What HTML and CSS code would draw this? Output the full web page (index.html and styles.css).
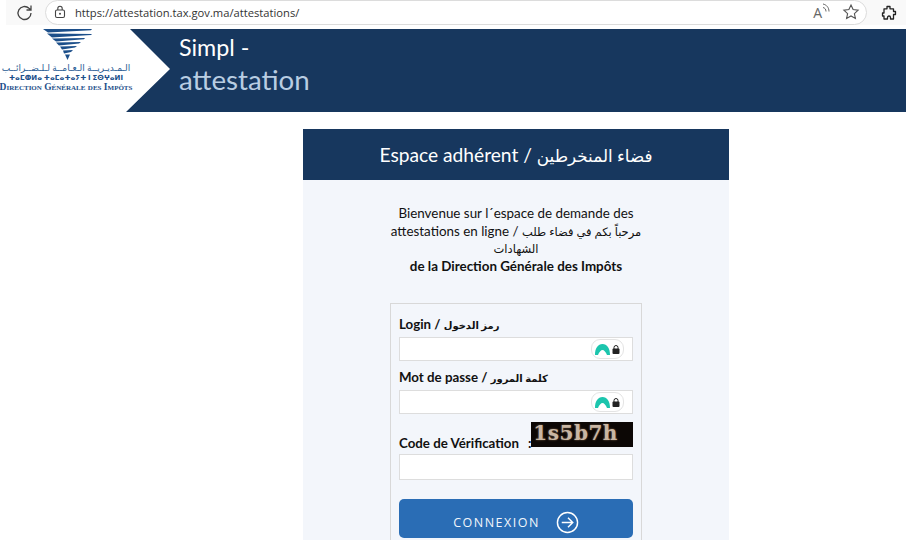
FILE: index.html
```html
<!DOCTYPE html>
<html lang="fr">
<head>
    <meta charset="UTF-8">
    <title>Simpl - attestation</title>
    <link rel="stylesheet" href="styles.css">
</head>
<body>
    <div class="toolbar">
        <svg class="reload" width="20" height="20" viewBox="0 0 20 20"><path d="M16 10a6.500 6.500 0 1 1-2-4.700L16 7M16 2.500V7h-4.500" fill="none" stroke="#444" stroke-width="1.300"/></svg>
        <div class="address">
            <svg width="14" height="14" viewBox="0 0 14 14"><rect x="2.500" y="5" width="9" height="7.500" rx="1.500" fill="none" stroke="#444" stroke-width="1.100"/><path d="M4.800 5V3.500a2.200 2.200 0 0 1 4.400 0V5" fill="none" stroke="#444" stroke-width="1.100"/><circle cx="7" cy="8.800" r="1" fill="#444"/></svg>
            <span class="url">https://attestation.tax.gov.ma/attestations/</span>
            <span class="read">A<svg width="10" height="12" viewBox="0 0 10 12"><path d="M1 1c3.500.8 6 3.500 6 7.500M1 4.500c1.800.4 3 1.800 3 4" fill="none" stroke="#666" stroke-width="1"/></svg></span>
            <svg class="star" width="18" height="18" viewBox="0 0 18 18"><path d="M9 2l2.100 4.600 5 .6-3.700 3.400 1 4.900L9 13l-4.400 2.500 1-4.900L1.900 7.200l5-.6z" fill="none" stroke="#555" stroke-width="1.100"/></svg>
        </div>
        <svg class="ext" width="16" height="16" viewBox="0 0 16 16"><path d="M6 1.500h3v2.300h3.500v2.700h2v3h-2v4.500H9.500v-1.500a1.500 1.500 0 0 0-3 0v1.500H3v-3H1.500V8H3V3.800h3z" fill="none" stroke="#222" stroke-width="1.300" stroke-linejoin="round"/></svg>
    </div>

    <header class="banner">
        <div class="logo">
            <svg class="logo-mark" width="50" height="31" viewBox="0 0 50 31">
                <path d="M0 0h49l-1 1.200L5 3.500zM4 4.500l45 .5-1 1L9 8.500zM9 9.500l33-.5-1 1.200L13 12.500zM13 13.500l25-.5-2 1.500L16 16.500zM17 17.500l17-.5-2 1.500L19 20.500zM20 21.500l10-.5-2 2-7 1.500zM22 25.500h5L24.500 31z" fill="#1c4f8a"/>
            </svg>
            <div class="logo-ar" dir="rtl">الـمـديـريــة الـعـامــة لـلـضــرائــب</div>
            <div class="logo-am">ⵜⴰⵎⵀⵍⴰ ⵜⴰⵎⴰⵜⴰⵢⵜ ⵏ ⵉⵙⵖⴰⵍⵏ</div>
            <div class="logo-fr">Direction Générale des Impôts</div>
        </div>
        <div class="title-band">
            <div class="title-main">Simpl -</div>
            <div class="title-sub">attestation</div>
        </div>
    </header>

    <main class="card">
        <h2 class="card-head">Espace adhérent / <span class="ar-head">فضاء المنخرطين</span></h2>
        <div class="card-body">
            <p class="welcome">Bienvenue sur l´espace de demande des attestations en ligne / <span class="ar-text">مرحباً بكم في فضاء طلب الشهادات</span><br><b>de la Direction Générale des Impôts</b></p>
            <form class="login">
                <label class="field-label">Login / <span class="ar-label">رمز الدخول</span></label>
                <div class="input pw"><span class="badge"><svg width="15" height="11" viewBox="0 0 15 11"><path d="M0 11C0 4 3 0 7.500 0S15 4 15 11H12C11 8 9 6 7.500 6S4 8 3 11z" fill="#1cc5ad"/></svg><svg width="8" height="9" viewBox="0 0 8 9"><rect x="0.500" y="3.500" width="7" height="5.500" rx="1" fill="#222"/><path d="M2 4V2.500a2 2 0 0 1 4 0V4" fill="none" stroke="#222"/></svg></span></div>
                <label class="field-label">Mot de passe / <span class="ar-label">كلمة المرور</span></label>
                <div class="input pw"><span class="badge"><svg width="15" height="11" viewBox="0 0 15 11"><path d="M0 11C0 4 3 0 7.500 0S15 4 15 11H12C11 8 9 6 7.500 6S4 8 3 11z" fill="#1cc5ad"/></svg><svg width="8" height="9" viewBox="0 0 8 9"><rect x="0.500" y="3.500" width="7" height="5.500" rx="1" fill="#222"/><path d="M2 4V2.500a2 2 0 0 1 4 0V4" fill="none" stroke="#222"/></svg></span></div>
                <div class="captcha-row">
                    <label class="field-label code">Code de Vérification</label>
                    <span class="colon">:</span>
                    <span class="captcha">1s5b7h</span>
                </div>
                <div class="input code-input"></div>
                <button type="button" class="connect">CONNEXION
                    <svg width="23" height="23" viewBox="0 0 24 24"><circle cx="12" cy="12" r="10.500" fill="none" stroke="#fff" stroke-width="1.500"/><path d="M6 12h11.500M12.500 7l5 5-5 5" fill="none" stroke="#fff" stroke-width="1.500"/></svg>
                </button>
            </form>
        </div>
    </main>
</body>
</html>
```

FILE: styles.css
```css
html, body {
    height: 540px;
    overflow: hidden;
}
body {
    margin: 0;
    background-color: #ffffff;
    color: #111;
    font-family: Lato, "Noto Sans", "DejaVu Sans", sans-serif;
}

/* browser bar */
.toolbar {
    display: flex;
    align-items: center;
    height: 25px;
    margin-left: 6px;
    margin-bottom: 4px;
    padding-right: 9px;
    background-color: #f9f9f9;
}
.reload {
    margin-left: 9px;
    margin-right: 10px;
}
.address {
    flex: 1;
    display: flex;
    align-items: center;
    gap: 8px;
    height: 25px;
    margin-top: -1px;
    padding-left: 7px;
    padding-right: 6px;
    box-sizing: border-box;
    background-color: #fff;
    border: 1px solid #dcdcdc;
    border-radius: 13px;
}
.url {
    flex: 1;
    font-family: "Open Sans", sans-serif;
    font-size: 11.200px;
    color: #333;
}
.read {
    display: flex;
    margin-right: 2px;
    font-family: "Open Sans", sans-serif;
    font-size: 14px;
    color: #666;
}
.ext {
    margin-left: 14px;
}

/* banner */
.banner {
    display: flex;
    height: 83px;
    margin-left: 6px;
    margin-bottom: 17px;
}
.logo {
    width: 120px;
    flex: none;
    display: flex;
    flex-direction: column;
    align-items: center;
}
.logo-mark {
    margin-left: 3px;
}
.logo-ar {
    margin-top: 2px;
    font-size: 9px;
    line-height: 11px;
    color: #2a5d95;
    white-space: nowrap;
}
.logo-am {
    font-family: "Noto Sans", "DejaVu Sans", sans-serif;
    font-size: 7px;
    line-height: 10px;
    font-weight: bold;
    color: #1c4f8a;
    white-space: nowrap;
}
.logo-fr {
    font-family: "Liberation Serif", serif;
    font-variant: small-caps;
    font-size: 9.500px;
    font-weight: bold;
    line-height: 9px;
    color: #1c4f8a;
    white-space: nowrap;
}
.title-band {
    flex: 1;
    padding-left: 53px;
    padding-top: 3px;
    background-color: #17375e;
    clip-path: polygon(4px 0, 100% 0, 100% 100%, 0 100%, 44px 40px);
}
.title-main {
    font-size: 23.300px;
    line-height: 30px;
    color: #ffffff;
}
.title-sub {
    font-size: 27.700px;
    line-height: 35px;
    color: #b9cde2;
}

/* card */
.card {
    width: 426px;
    margin-left: 303px;
}
.card-head {
    margin: 0;
    height: 51px;
    line-height: 51px;
    background-color: #17375e;
    color: #fff;
    text-align: center;
    font-size: 19.200px;
    font-weight: normal;
}
.ar-head {
    font-size: 16.800px;
}
.card-body {
    height: 360px;
    padding-top: 25px;
    box-sizing: border-box;
    background-color: #f3f6fb;
}
.welcome {
    margin: 0 auto 28px;
    width: 260px;
    text-align: center;
    font-size: 13.400px;
    line-height: 17.500px;
}
.ar-text {
    font-size: 11.500px;
}
.login {
    width: 234px;
    height: 236px;
    margin-left: 87px;
    padding: 11px 8px 0;
    box-sizing: content-box;
    border: 1px solid #d8d8d8;
    border-bottom: none;
}
.field-label {
    display: block;
    margin-bottom: 2px;
    font-size: 13.300px;
    font-weight: bold;
    line-height: 19px;
}
.ar-label {
    font-size: 10px;
}
.input {
    display: flex;
    align-items: center;
    justify-content: flex-end;
    height: 24px;
    margin-bottom: 7px;
    padding-right: 8px;
    box-sizing: border-box;
    background-color: #fff;
    border: 1px solid #dddddd;
}
.badge {
    display: flex;
    align-items: center;
    gap: 2px;
    height: 18px;
    padding: 0 3px;
    background-color: #fff;
    border: 1px solid #e4e4e4;
    border-radius: 9px;
}
.captcha-row {
    display: flex;
    align-items: flex-end;
    height: 32px;
}
.code {
    flex: none;
    margin-bottom: 0;
    white-space: nowrap;
}
.colon {
    margin-left: 9px;
    font-size: 13.300px;
    font-weight: bold;
    line-height: 19px;
}
.captcha {
    align-self: flex-start;
    width: 104px;
    height: 25px;
    margin-top: 1px;
    background-color: #0c0705;
    color: #c9b6a3;
    font-family: "DejaVu Serif", serif;
    font-weight: bold;
    font-size: 20px;
    line-height: 23px;
    letter-spacing: 0.500px;
    text-indent: 2px;
    text-shadow: 0 0 2px #8a6f55;
    overflow: hidden;
}
.code-input {
    height: 26px;
    margin-top: 1px;
    margin-bottom: 19px;
}
.connect {
    display: flex;
    align-items: center;
    justify-content: center;
    gap: 16px;
    width: 100%;
    height: 39px;
    padding: 7px 0 0 0;
    background-color: #2a6db5;
    color: #f2f6fb;
    border: none;
    border-radius: 5px;
    font-family: "Open Sans", sans-serif;
    font-size: 12.500px;
    letter-spacing: 1.500px;
    cursor: pointer;
}
```
